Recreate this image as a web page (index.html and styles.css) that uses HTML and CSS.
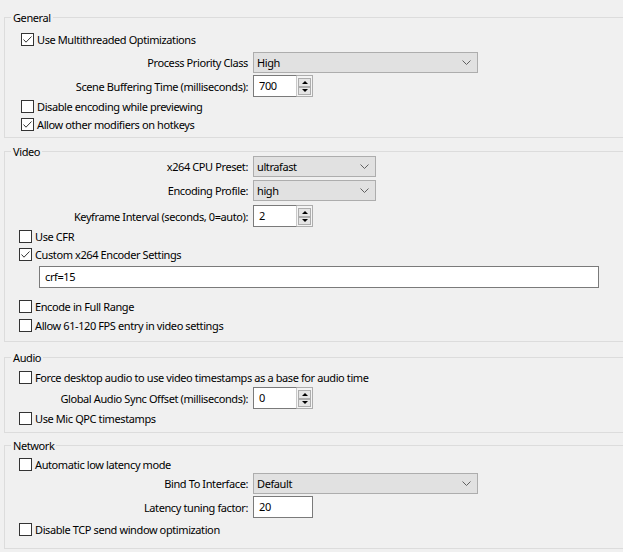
FILE: index.html
```html
<!DOCTYPE html>
<html>
<head>
<meta charset="utf-8">
<link rel="stylesheet" href="styles.css">
</head>
<body>
<fieldset class="group group-general">
  <legend>General</legend>
  <label class="check mt5"><span class="box on"><svg viewBox="0 0 13 13" width="13" height="13"><polyline points="2.5,6.5 5,9.2 10.5,3.5"/></svg></span><span>Use Multithreaded Optimizations</span></label>
  <div class="form mt3"><span class="lbl">Process Priority Class</span><div class="combo wide"><span>High</span><svg class="chev" viewBox="0 0 9 5" width="9" height="5"><polyline points="0.5,0.5 4.5,4.5 8.5,0.5"/></svg></div></div>
  <div class="form mt2"><span class="lbl">Scene Buffering Time (milliseconds):</span><div class="spin"><span class="edit">700</span><span class="btns"><span class="btn"><i class="up"></i></span><span class="btn"><i class="down"></i></span></span></div></div>
  <label class="check"><span class="box"></span><span>Disable encoding while previewing</span></label>
  <label class="check mtn1"><span class="box on"><svg viewBox="0 0 13 13" width="13" height="13"><polyline points="2.5,6.5 5,9.2 10.5,3.5"/></svg></span><span>Allow other modifiers on hotkeys</span></label>
</fieldset>

<fieldset class="group group-video">
  <legend>Video</legend>
  <div class="form mtn3"><span class="lbl">x264 CPU Preset:</span><div class="combo narrow"><span>ultrafast</span><svg class="chev" viewBox="0 0 9 5" width="9" height="5"><polyline points="0.5,0.5 4.5,4.5 8.5,0.5"/></svg></div></div>
  <div class="form mt3"><span class="lbl">Encoding Profile:</span><div class="combo narrow"><span>high</span><svg class="chev" viewBox="0 0 9 5" width="9" height="5"><polyline points="0.5,0.5 4.5,4.5 8.5,0.5"/></svg></div></div>
  <div class="form mt4"><span class="lbl">Keyframe Interval (seconds, 0=auto):</span><div class="spin"><span class="edit">2</span><span class="btns"><span class="btn"><i class="up"></i></span><span class="btn"><i class="down"></i></span></span></div></div>
  <label class="check"><span class="box"></span><span>Use CFR</span></label>
  <label class="check mtn1"><span class="box on"><svg viewBox="0 0 13 13" width="13" height="13"><polyline points="2.5,6.5 5,9.2 10.5,3.5"/></svg></span><span>Custom x264 Encoder Settings</span></label>
  <div class="textline mt2"><span>crf=15</span></div>
  <label class="check mt9"><span class="box"></span><span>Encode in Full Range</span></label>
  <label class="check"><span class="box"></span><span>Allow 61-120 FPS entry in video settings</span></label>
</fieldset>

<fieldset class="group group-audio">
  <legend>Audio</legend>
  <label class="check mt3"><span class="box"></span><span>Force desktop audio to use video timestamps as a base for audio time</span></label>
  <div class="form"><span class="lbl">Global Audio Sync Offset (milliseconds):</span><div class="spin"><span class="edit">0</span><span class="btns"><span class="btn"><i class="up"></i></span><span class="btn"><i class="down"></i></span></span></div></div>
  <label class="check"><span class="box"></span><span>Use Mic QPC timestamps</span></label>
</fieldset>

<fieldset class="group group-network">
  <legend>Network</legend>
  <label class="check mt2"><span class="box"></span><span>Automatic low latency mode</span></label>
  <div class="form mtn1"><span class="lbl">Bind To Interface:</span><div class="combo wide"><span>Default</span><svg class="chev" viewBox="0 0 9 5" width="9" height="5"><polyline points="0.5,0.5 4.5,4.5 8.5,0.5"/></svg></div></div>
  <div class="form mt2"><span class="lbl">Latency tuning factor:</span><span class="field">20</span></div>
  <label class="check mt2"><span class="box"></span><span>Disable TCP send window optimization</span></label>
</fieldset>
</body>
</html>
```

FILE: styles.css
```css
html, body {
  margin: 0;
  padding: 0;
  overflow: hidden;
}
body {
  background: #f0f0f0;
  color: #000;
  font-family: "Noto Sans", "Open Sans", sans-serif;
  font-size: 11px;
  letter-spacing: -0.4px;
  width: 623px;
  height: 552px;
}
.group {
  margin: 0 0 0 4px;
  padding: 0;
  border: 1px solid #dcdcdc;
  border-right: 0;
  min-inline-size: 0;
  display: flex;
  flex-direction: column;
}
.group legend {
  margin-left: 6px;
  padding: 0 2px;
  line-height: 15px;
  height: 15px;
}
.group-general { margin-top: 10px; padding-bottom: 3px; }
.group-video { margin-top: 6px; padding-bottom: 6px; }
.group-audio { margin-top: 8px; padding-bottom: 4px; }
.group-network { margin-top: 5px; padding-bottom: 9px; }

.check {
  display: flex;
  align-items: center;
  height: 19px;
  padding-left: 14px;
}
.group-general .check { padding-left: 16px; }
.box {
  width: 11px;
  height: 11px;
  border: 1px solid #333;
  background: #fff;
  margin-right: 3px;
  position: relative;
  flex: none;
}
.box svg {
  position: absolute;
  left: -1px;
  top: -1px;
}
.box polyline {
  fill: none;
  stroke: #333;
  stroke-width: 1;
}

.form {
  display: flex;
  align-items: center;
}
.lbl {
  width: 243px;
  text-align: right;
  margin-right: 5px;
  flex: none;
}
.combo {
  height: 19px;
  border: 1px solid #adadad;
  background: #e1e1e1;
  display: flex;
  align-items: center;
  justify-content: space-between;
  padding: 0 6px 0 3px;
  box-sizing: content-box;
}
.combo.wide { width: 214px; }
.combo.narrow { width: 112px; }
.chev polyline {
  fill: none;
  stroke: #606060;
  stroke-width: 1;
}
.spin {
  display: flex;
  height: 22px;
  width: 60px;
}
.spin .edit {
  width: 37px;
  height: 20px;
  border: 1px solid #7a7a7a;
  border-right: 1px solid #c8c8c8;
  background: #fff;
  padding-left: 5px;
  line-height: 19px;
}
.btns {
  width: 16px;
  border: 1px solid #adadad;
  border-left: 0;
  background: #f4f4f4;
  display: flex;
  flex-direction: column;
  justify-content: space-between;
  padding: 2px 1px 1px 1px;
  box-sizing: border-box;
  height: 22px;
}
.btn {
  height: 7px;
  border: 1px solid #adadad;
  background: #e5e5e5;
  display: flex;
  align-items: center;
  justify-content: center;
}
.btn i {
  width: 0;
  height: 0;
  border-left: 3px solid transparent;
  border-right: 3px solid transparent;
}
.btn .up { border-bottom: 3px solid #000; }
.btn .down { border-top: 3px solid #000; }
.field {
  width: 53px;
  height: 20px;
  border: 1px solid #7a7a7a;
  background: #fff;
  padding-left: 5px;
  line-height: 19px;
}
.textline {
  margin-left: 34px;
  width: 553px;
  height: 20px;
  border: 1px solid #7a7a7a;
  background: #fff;
  padding-left: 5px;
  line-height: 19px;
}

.mt1 { margin-top: 1px; }
.mt2 { margin-top: 2px; }
.mt3 { margin-top: 3px; }
.mt4 { margin-top: 4px; }
.mt5 { margin-top: 5px; }
.mt9 { margin-top: 9px; }
.mtn1 { margin-top: -1px; }
.mtn3 { margin-top: -3px; }
```
